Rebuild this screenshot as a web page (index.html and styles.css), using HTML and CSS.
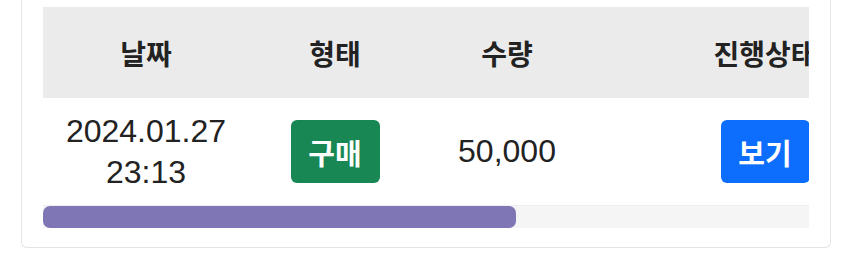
FILE: index.html
```html
<!DOCTYPE html>
<html lang="ko">
<head>
<meta charset="utf-8">
<title>거래 내역</title>
<link rel="stylesheet" href="styles.css">
</head>
<body>
<div class="card">
  <div class="scroll">
    <table class="history">
      <colgroup>
        <col class="c-date">
        <col class="c-type">
        <col class="c-amount">
        <col class="c-status">
        <col class="c-extra">
      </colgroup>
      <thead>
        <tr>
          <th>날짜</th>
          <th>형태</th>
          <th>수량</th>
          <th>진행상태</th>
          <th></th>
        </tr>
      </thead>
      <tbody>
        <tr>
          <td class="date">2024.01.27<br>23:13</td>
          <td><span class="btn btn-green">구매</span></td>
          <td class="num">50,000</td>
          <td><span class="btn btn-blue">보기</span></td>
          <td></td>
        </tr>
      </tbody>
    </table>
  </div>
  <div class="track"><div class="thumb" style="width: 473px;"></div></div>
</div>
</body>
</html>
```

FILE: styles.css
```css
html, body {
  margin: 0;
  padding: 0;
  background: #ffffff;
}

body {
  font-family: "Noto Sans CJK KR", "Noto Sans", sans-serif;
  color: #222222;
}

.card {
  margin-left: 21px;
  width: 810px;
  box-sizing: border-box;
  padding: 7px 21px 19px 21px;
  border: 1px solid #e4e4e4;
  border-top: none;
  border-radius: 0 0 6px 6px;
  background: #ffffff;
}

.scroll {
  width: 766px;
  overflow: hidden;
  scrollbar-width: none;
}

.track {
  width: 766px;
  height: 23px;
  background: #f5f5f5;
  border-top: 1px solid #efefef;
  box-sizing: border-box;
  display: flex;
}

.thumb {
  height: 100%;
  background: #7f76b6;
  border-radius: 7px;
}

.history {
  border-collapse: collapse;
  border-spacing: 0;
  table-layout: fixed;
  width: 1240px;
}

.c-date { width: 206px; }
.c-type { width: 172px; }
.c-amount { width: 172px; }
.c-status { width: 344px; }
.c-extra { width: 346px; }

.history th {
  height: 91px;
  padding: 0;
  background: #ebebeb;
  font-size: 28px;
  font-weight: 700;
  color: #222222;
  text-align: center;
  vertical-align: middle;
  white-space: nowrap;
}

.history td {
  height: 107px;
  padding: 0;
  text-align: center;
  vertical-align: middle;
}

.date,
.num {
  font-family: "Liberation Sans", Arial, sans-serif;
  font-size: 32px;
  color: #222222;
}

.date {
  line-height: 41px;
  padding-bottom: 5px;
}

.num {
  padding-bottom: 4px;
}

.btn {
  display: inline-flex;
  align-items: center;
  justify-content: center;
  width: 89px;
  height: 63px;
  border-radius: 6px;
  color: #ffffff;
  font-size: 29px;
  font-weight: 700;
  vertical-align: middle;
}

.btn-green {
  background: #198754;
}

.btn-blue {
  background: #0d6efd;
}
```
